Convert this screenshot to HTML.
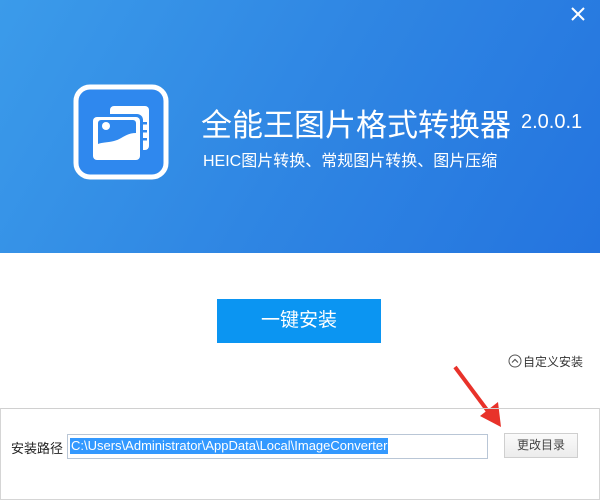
<!DOCTYPE html>
<html><head><meta charset="utf-8"><style>
body{margin:0;width:600px;height:500px;overflow:hidden;background:#fff;font-family:"Liberation Sans","Noto Sans CJK SC",sans-serif;position:relative}
.hd{position:absolute;left:0;top:0;width:600px;height:253px;background:linear-gradient(120deg,#3b9bea 0%,#2f86e3 50%,#2474df 100%)}
.t{position:absolute;color:#fff;white-space:nowrap}
.x{position:absolute;right:14px;top:6px}
.btn{position:absolute;left:217px;top:299px;width:164px;height:44px;background:#0b95f2;color:#fff;font-size:19px;text-align:center;line-height:44px}
.bot{position:absolute;left:0;top:408px;width:598px;height:90px;border:1px solid #d5d5d5;border-top:1px solid #d0d0d0}
.inp{position:absolute;left:67px;top:434px;width:419px;height:23px;border:1px solid #b9c6d6;background:#fff}
.sel{position:absolute;left:2px;top:3px;background:#3399ff;color:#fff;font-size:13px;line-height:16px;padding:0 1px}
.b2{position:absolute;left:504px;top:433px;width:72px;height:23px;border:1px solid #cfcfcf;background:linear-gradient(#fafafa,#ececec);font-size:12px;color:#444;text-align:center;line-height:23px}
</style></head><body>
<div class="hd">
<svg class="x" width="16" height="16" viewBox="0 0 16 16"><path d="M2 2L14 14M14 2L2 14" stroke="#fff" stroke-width="2"/></svg>
<svg style="position:absolute;left:73px;top:84px" width="96" height="96" viewBox="0 0 96 96">
<rect x="3" y="3" width="90" height="90" rx="14" fill="#2f88ee" stroke="#fff" stroke-width="5"/>
<rect x="37" y="22" width="39" height="44" rx="4" fill="#fff"/>
<rect x="68" y="38" width="6" height="2.5" fill="#2f88ee"/><rect x="68" y="46" width="6" height="2.5" fill="#2f88ee"/><rect x="68" y="54" width="6" height="2.5" fill="#2f88ee"/>
<rect x="17" y="30" width="53" height="49" rx="6" fill="#2f88ee"/>
<rect x="20" y="33" width="47" height="43" rx="4" fill="#fff"/>
<path d="M28 36h32a3 3 0 0 1 3 3v10c-10 0-14 6-22 8s-11 1-16 3V39a3 3 0 0 1 3-3z" fill="#2f88ee"/>
<circle cx="33" cy="42" r="4" fill="#fff"/>
</svg>
<div class="t" style="left:201px;top:100px;font-size:31px">全能王图片格式转换器</div>
<div class="t" style="left:521px;top:111px;font-size:20px">2.0.0.1</div>
<div class="t" style="left:203px;top:147px;font-size:16px">HEIC图片转换、常规图片转换、图片压缩</div>
</div>
<div class="btn">一键安装</div>
<svg style="position:absolute;left:508px;top:354px" width="14" height="14" viewBox="0 0 14 14"><circle cx="7" cy="7" r="6" fill="none" stroke="#555"/><path d="M4 8.5L7 5.5 10 8.5" fill="none" stroke="#555" stroke-width="1.2"/></svg>
<div class="t" style="left:523px;top:353px;font-size:12px;color:#333">自定义安装</div>
<svg style="position:absolute;left:450px;top:364px" width="60" height="65" viewBox="0 0 60 65"><path d="M5 3L40 50" stroke="#e8322a" stroke-width="4"/><path d="M30 52L51 63 48 38z" fill="#e8322a"/></svg>
<div class="bot"></div>
<div class="t" style="left:11px;top:438px;font-size:13px;color:#222">安装路径</div>
<div class="inp"><span class="sel">C:\Users\Administrator\AppData\Local\ImageConverter</span></div>
<div class="b2">更改目录</div>
</body></html>
